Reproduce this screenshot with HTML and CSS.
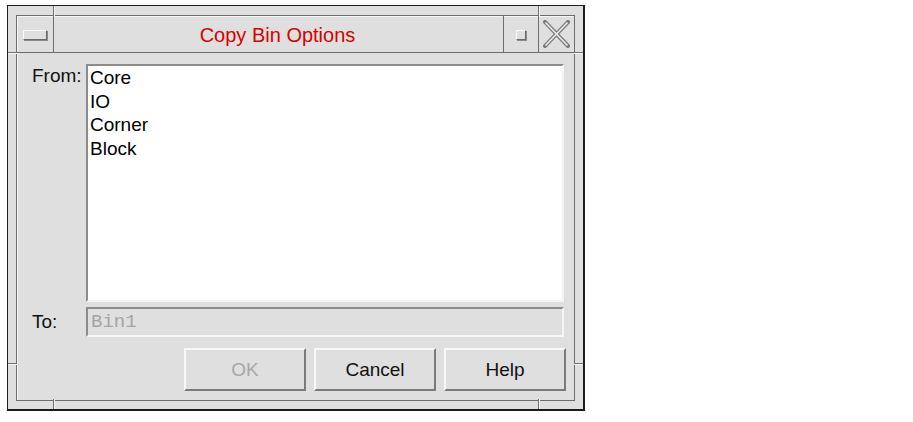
FILE: index.html
```html
<!DOCTYPE html>
<html>
<head>
<meta charset="utf-8">
<link rel="stylesheet" href="styles.css">
</head>
<body>
<div class="window">
  <span class="seg seg-v seg-tl"></span>
  <span class="seg seg-v seg-tr"></span>
  <span class="seg seg-v seg-bl"></span>
  <span class="seg seg-v seg-br"></span>
  <span class="seg seg-h seg-lt"></span>
  <span class="seg seg-h seg-rt"></span>
  <span class="seg seg-h seg-lb"></span>
  <span class="seg seg-h seg-rb"></span>
  <div class="inner">
    <div class="titlebar">
      <div class="tb-btn menu-btn"><span class="menu-bar"></span></div>
      <div class="title">Copy Bin Options</div>
      <div class="tb-btn max-btn"><span class="max-box"></span></div>
      <div class="tb-btn close-btn">
        <svg width="27" height="28" viewBox="0 0 27 28">
          <path d="M2 2 L25 26 M25 2 L2 26" stroke="#7a7a7a" stroke-width="4" stroke-linecap="square" fill="none"/>
          <path d="M2.5 2.5 L24.5 25.5 M24.5 2.5 L2.5 25.5" stroke="#ececec" stroke-width="1.6" fill="none"/>
        </svg>
      </div>
    </div>
    <div class="client">
      <div class="form">
        <div class="label label-from">From:</div>
        <div class="list">
          <div class="item">Core</div>
          <div class="item">IO</div>
          <div class="item">Corner</div>
          <div class="item">Block</div>
        </div>
        <div class="label label-to">To:</div>
        <div class="field">Bin1</div>
      </div>
      <div class="buttons">
        <div class="btn disabled">OK</div>
        <div class="btn">Cancel</div>
        <div class="btn">Help</div>
      </div>
    </div>
  </div>
</div>
</body>
</html>
```
FILE: styles.css
```css
html, body {
  margin: 0;
  padding: 0;
  background: #ffffff;
}
body {
  font-family: "Liberation Sans", Arial, sans-serif;
  padding: 5px 0 0 7px;
}
.window {
  position: relative;
  box-sizing: border-box;
  width: 578px;
  height: 406px;
  border: 2px solid #1c1c1c;
  border-top-width: 1px;
  border-left-width: 1px;
  background: #dfdfdf;
  padding: 9px 8px 8px 8px;
}
.seg {
  position: absolute;
  background: #707070;
}
.seg-v { width: 1px; height: 10px; box-shadow: 1px 0 0 #f4f4f4; }
.seg-h { height: 1px; width: 9px; box-shadow: 0 1px 0 #f4f4f4; }
.seg-tl { left: 45px; top: 0; }
.seg-tr { left: 530px; top: 0; }
.seg-bl { left: 45px; bottom: 0; }
.seg-br { left: 530px; bottom: 0; }
.seg-lt { left: 0; top: 46px; }
.seg-rt { right: 0; top: 46px; }
.seg-lb { left: 0; top: 357px; }
.seg-rb { right: 0; top: 357px; }

.inner {
  box-sizing: border-box;
  height: 100%;
  border: 1px solid #6e6e6e;
  box-shadow: inset 1px 1px 0 #f6f6f6;
  display: flex;
  flex-direction: column;
}
.titlebar {
  height: 36px;
  flex: 0 0 auto;
  display: flex;
  border-bottom: 1px solid #6e6e6e;
}
.tb-btn {
  flex: 0 0 auto;
  display: flex;
  align-items: center;
  justify-content: center;
}
.menu-btn {
  width: 36px;
  border-right: 1px solid #6e6e6e;
}
.menu-bar {
  box-sizing: border-box;
  width: 24px;
  height: 10px;
  margin-top: 1px;
  border: 1px solid;
  border-color: #fafafa #6a6a6a #6a6a6a #fafafa;
  box-shadow: 1px 1px 0 #8a8a8a;
}
.title {
  flex: 1 1 auto;
  text-align: center;
  color: #d80000;
  font-size: 20px;
  line-height: 38px;
  padding-right: 2px;
}
.max-btn {
  width: 34px;
  border-left: 1px solid #6e6e6e;
}
.max-box {
  box-sizing: border-box;
  width: 10px;
  height: 10px;
  margin-top: 1px;
  border: 1px solid;
  border-color: #fafafa #6a6a6a #6a6a6a #fafafa;
  box-shadow: 1px 1px 0 #8a8a8a;
}
.close-btn {
  width: 35px;
  border-left: 1px solid #6e6e6e;
}
.client {
  flex: 1;
  display: flex;
  flex-direction: column;
  padding: 11px 10px 9px 0;
}
.form {
  display: grid;
  grid-template-columns: 69px 1fr;
  grid-template-rows: 238px 30px;
  row-gap: 5px;
}
.label {
  padding-left: 15px;
  font-size: 19px;
  color: #111;
}
.label-from { line-height: 24px; padding-top: 0; }
.label-to { line-height: 30px; }
.list {
  box-sizing: border-box;
  background: #ffffff;
  border: 2px solid;
  border-color: #8c8c8c #f4f4f4 #f4f4f4 #8c8c8c;
  padding: 0 2px;
  font-size: 19px;
  line-height: 23.6px;
  color: #000;
}
.field {
  box-sizing: border-box;
  border: 2px solid;
  border-color: #8c8c8c #f6f6f6 #f6f6f6 #8c8c8c;
  font-family: "Liberation Mono", "Courier New", monospace;
  font-size: 19px;
  line-height: 26px;
  color: #a4a4a4;
  padding-left: 3px;
}
.buttons {
  display: flex;
  justify-content: flex-end;
  gap: 8px;
  margin-top: 11px;
  margin-right: -2px;
}
.btn {
  box-sizing: border-box;
  width: 122px;
  height: 43px;
  border: 2px solid;
  border-color: #f8f8f8 #7a7a7a #7a7a7a #f8f8f8;
  display: flex;
  align-items: center;
  justify-content: center;
  font-size: 19px;
  color: #111;
}
.btn.disabled {
  color: #a8a8a8;
}
```
